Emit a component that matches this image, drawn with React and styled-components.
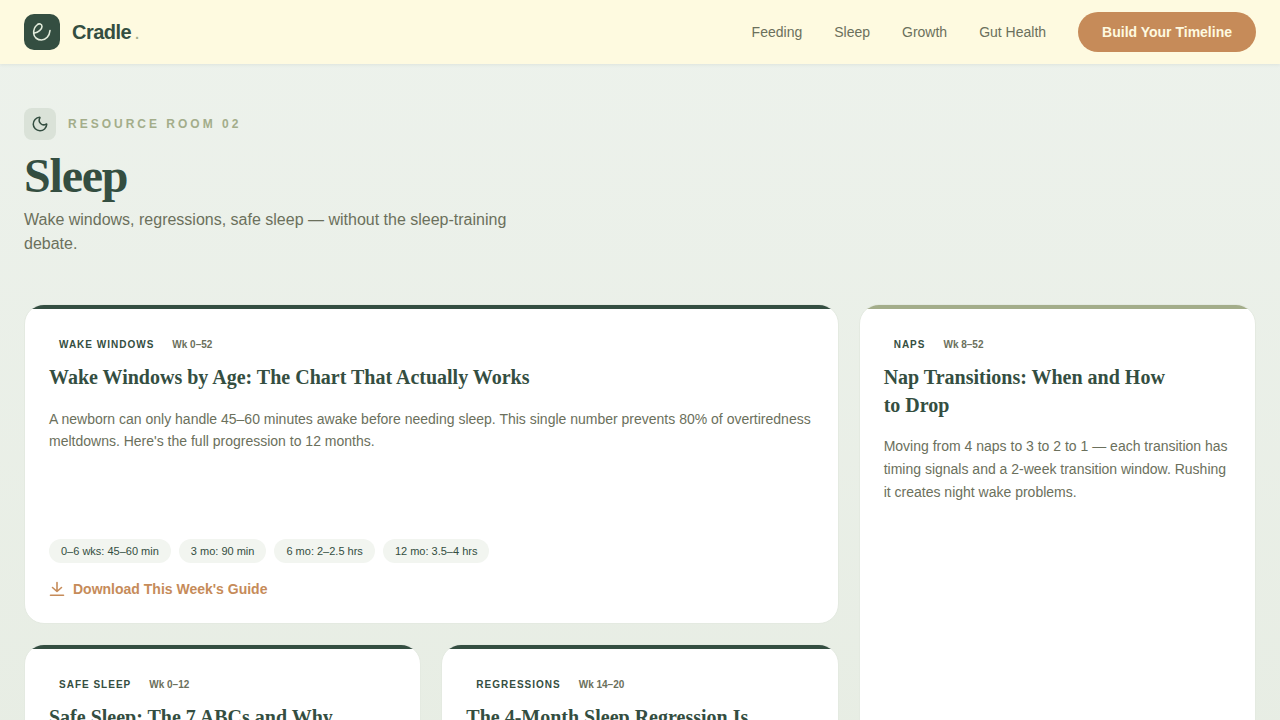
import React from 'react';
import styled, { createGlobalStyle } from 'styled-components';
import { Moon } from 'lucide-react';

const GlobalStyle = createGlobalStyle`
  * { box-sizing: border-box; }
  html, body { margin: 0; padding: 0; }
  body {
    font-family: "Liberation Sans", Arial, sans-serif;
    background: linear-gradient(180deg, #edf2ec 0%, #e6ece2 100%);
    min-height: 100vh;
    color: #344e41;
  }
`;

const Header = styled.header`
  height: 64px;
  padding: 0 24px;
  background: #fefae0;
  box-shadow: 0 1px 3px rgba(52, 78, 65, 0.08);
  display: flex;
  align-items: center;
  justify-content: space-between;
`;
const Brand = styled.div`
  display: flex;
  align-items: center;
  gap: 12px;
`;
const LogoMark = styled.div`
  width: 36px;
  height: 36px;
  border-radius: 10px;
  background: #344e41;
  display: flex;
  align-items: center;
  justify-content: center;
`;
const BrandName = styled.span`
  font-size: 20px;
  font-weight: 700;
  letter-spacing: -0.5px;
  color: #344e41;
`;
const BrandDot = styled.span`
  color: #a3ad8a;
  font-weight: 400;
  margin-left: 3px;
`;
const Nav = styled.nav`
  display: flex;
  align-items: center;
  gap: 32px;
`;
const NavLink = styled.a`
  font-size: 14px;
  color: #6b705c;
`;
const Cta = styled.button`
  height: 40px;
  padding: 0 24px;
  border: 0;
  border-radius: 20px;
  background: #c68b59;
  color: #fefae0;
  font-family: inherit;
  font-size: 14px;
  font-weight: 700;
`;

const Main = styled.main`
  padding: 44px 24px 48px;
`;
const Eyebrow = styled.div`
  display: flex;
  align-items: center;
  gap: 12px;
  margin-bottom: 12px;
`;
const EyebrowIcon = styled.div`
  width: 32px;
  height: 32px;
  border-radius: 8px;
  background: #dae2d8;
  color: #344e41;
  display: flex;
  align-items: center;
  justify-content: center;
`;
const EyebrowText = styled.span`
  font-size: 12px;
  font-weight: 700;
  letter-spacing: 3px;
  color: #a3ad8a;
`;
const Title = styled.h1`
  margin: 0;
  font-family: "Liberation Serif", "Times New Roman", serif;
  font-size: 48px;
  line-height: 48px;
  font-weight: 700;
  letter-spacing: -1.2px;
  color: #344e41;
`;
const Subtitle = styled.p`
  margin: 8px 0 0;
  max-width: 520px;
  font-size: 16px;
  line-height: 24px;
  color: #6b705c;
`;

const Grid = styled.section`
  margin-top: 48px;
  display: grid;
  grid-template-columns: repeat(3, 1fr);
  gap: 20px;
`;
const Card = styled.article`
  position: relative;
  overflow: hidden;
  grid-column: ${(p) => (p.$wide ? 'span 2' : 'auto')};
  grid-row: ${(p) => (p.$tall ? 'span 2' : 'auto')};
  min-height: ${(p) => (p.$wide ? '320px' : '0')};
  padding: 24px 24px 22px;
  background: #fff;
  border: 1px solid #e4eae1;
  border-radius: 20px;
  display: flex;
  flex-direction: column;

  &::before {
    content: '';
    position: absolute;
    top: 0;
    left: 0;
    right: 0;
    height: 4px;
    background: ${(p) => p.$accent || '#344e41'};
  }
`;
const Meta = styled.div`
  display: flex;
  align-items: center;
  gap: 8px;
  margin: 5px 0 7px;
`;
const Tag = styled.span`
  padding: 4px 10px;
  font-size: 10px;
  line-height: 14px;
  font-weight: 700;
  letter-spacing: 1px;
  color: #344e41;
`;
const Weeks = styled.span`
  font-size: 10px;
  line-height: 14px;
  font-weight: 700;
  color: #6b705c;
`;
const CardTitle = styled.h2`
  margin: 0 0 16px;
  font-family: "Liberation Serif", "Times New Roman", serif;
  font-size: 20px;
  line-height: 28px;
  font-weight: 700;
  color: #344e41;
  max-width: ${(p) => (p.$narrow ? '300px' : 'none')};
`;
const CardText = styled.p`
  margin: ${(p) => (p.$loose ? '0' : '1px 0 0')};
  font-size: 14px;
  line-height: ${(p) => (p.$loose ? '23px' : '22px')};
  color: #6b705c;
`;
const Pills = styled.div`
  margin-top: auto;
  display: flex;
  gap: 8px;
`;
const Pill = styled.span`
  height: 24px;
  padding: 0 12px;
  border-radius: 12px;
  background: #f2f5f0;
  font-size: 11px;
  line-height: 24px;
  color: #344e41;
`;
const GuideLink = styled.a`
  margin-top: 14px;
  display: flex;
  align-items: center;
  gap: 8px;
  height: 24px;
  font-size: 14px;
  font-weight: 700;
  color: #c68b59;
`;

function Logo() {
  return (
    <svg width="24" height="24" viewBox="0 0 24 24" fill="none" stroke="#e3ecdc" strokeWidth="1.6" strokeLinecap="round">
      <path d="M4.5 13 C8 12.5 12 9.5 12 6.5 C12 4 9 3 7 5 C4.5 7 3.5 10.5 3.7 13.5 C4 17.5 7.5 20 11.5 20 C16 20 19.5 16 20 10.5" />
    </svg>
  );
}

function DownloadIcon() {
  return (
    <svg width="16" height="16" viewBox="0 0 16 16" fill="none" stroke="currentColor" strokeWidth="1.6" strokeLinecap="round" strokeLinejoin="round">
      <path d="M8 1.5 V10.5 M3.5 6.5 L8 10.5 L12.5 6.5 M1.5 14.2 H14.5" />
    </svg>
  );
}

export default function App() {
  return (
    <>
      <GlobalStyle />
      <Header>
        <Brand>
          <LogoMark><Logo /></LogoMark>
          <BrandName>Cradle<BrandDot>.</BrandDot></BrandName>
        </Brand>
        <Nav>
          <NavLink>Feeding</NavLink>
          <NavLink>Sleep</NavLink>
          <NavLink>Growth</NavLink>
          <NavLink>Gut Health</NavLink>
          <Cta>Build Your Timeline</Cta>
        </Nav>
      </Header>
      <Main>
        <Eyebrow>
          <EyebrowIcon><Moon size={18} /></EyebrowIcon>
          <EyebrowText>RESOURCE ROOM 02</EyebrowText>
        </Eyebrow>
        <Title>Sleep</Title>
        <Subtitle>Wake windows, regressions, safe sleep — without the sleep-training debate.</Subtitle>
        <Grid>
          <Card $wide>
            <Meta><Tag>WAKE WINDOWS</Tag><Weeks>Wk 0–52</Weeks></Meta>
            <CardTitle>Wake Windows by Age: The Chart That Actually Works</CardTitle>
            <CardText>A newborn can only handle 45–60 minutes awake before needing sleep. This single number prevents 80% of overtiredness meltdowns. Here's the full progression to 12 months.</CardText>
            <Pills>
              <Pill>0–6 wks: 45–60 min</Pill>
              <Pill>3 mo: 90 min</Pill>
              <Pill>6 mo: 2–2.5 hrs</Pill>
              <Pill>12 mo: 3.5–4 hrs</Pill>
            </Pills>
            <GuideLink><DownloadIcon />Download This Week's Guide</GuideLink>
          </Card>
          <Card $tall $accent="#a3ad8a">
            <Meta><Tag>NAPS</Tag><Weeks>Wk 8–52</Weeks></Meta>
            <CardTitle $narrow>Nap Transitions: When and How to Drop</CardTitle>
            <CardText $loose>Moving from 4 naps to 3 to 2 to 1 — each transition has timing signals and a 2-week transition window. Rushing it creates night wake problems.</CardText>
          </Card>
          <Card>
            <Meta><Tag>SAFE SLEEP</Tag><Weeks>Wk 0–12</Weeks></Meta>
            <CardTitle $narrow>Safe Sleep: The 7 ABCs and Why They Matter</CardTitle>
            <CardText>The essentials of a safe sleep space, explained plainly for every stage of the first few months at home.</CardText>
          </Card>
          <Card>
            <Meta><Tag>REGRESSIONS</Tag><Weeks>Wk 14–20</Weeks></Meta>
            <CardTitle $narrow>The 4-Month Sleep Regression Is Really a Progression</CardTitle>
            <CardText>Sleep cycles mature around this age. Here is what changes, how long it lasts and what helps in the meantime.</CardText>
          </Card>
        </Grid>
      </Main>
    </>
  );
}
